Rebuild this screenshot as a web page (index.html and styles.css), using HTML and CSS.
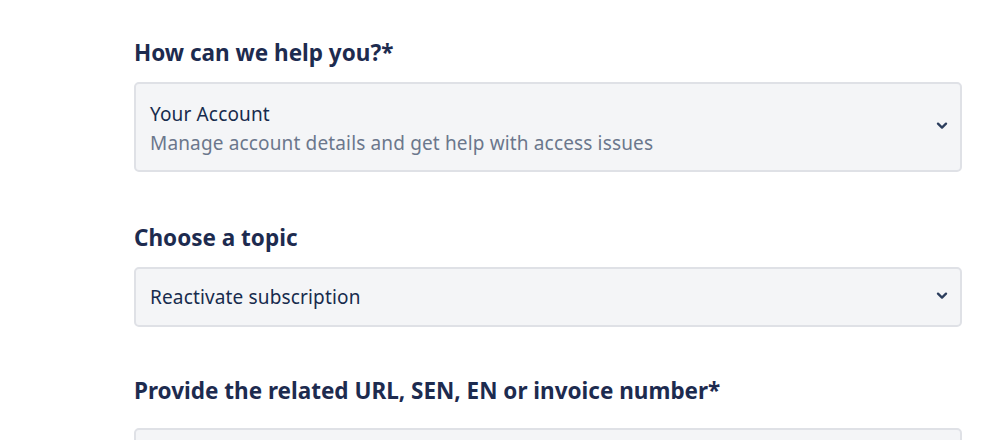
FILE: index.html
```html
<!DOCTYPE html>
<html lang="en">
<head>
<meta charset="utf-8">
<link rel="stylesheet" href="styles.css">
</head>
<body>
<form class="form">
  <div class="field">
    <h2 class="label">How can we help you?*</h2>
    <div class="select select-tall">
      <div class="select-text">
        <div class="value">Your Account</div>
        <div class="desc">Manage account details and get help with access issues</div>
      </div>
      <svg class="chev" viewBox="0 0 12 8" width="12" height="8"><path d="M2 1.6 L6 5.6 L10 1.6" fill="none" stroke="currentColor" stroke-width="2.3" stroke-linecap="round" stroke-linejoin="round"/></svg>
    </div>
  </div>
  <div class="field">
    <h2 class="label">Choose a topic</h2>
    <div class="select">
      <div class="select-text">
        <div class="value">Reactivate subscription</div>
      </div>
      <svg class="chev" viewBox="0 0 12 8" width="12" height="8"><path d="M2 1.6 L6 5.6 L10 1.6" fill="none" stroke="currentColor" stroke-width="2.3" stroke-linecap="round" stroke-linejoin="round"/></svg>
    </div>
  </div>
  <div class="field field-last">
    <h2 class="label">Provide the related URL, SEN, EN or invoice number*</h2>
    <div class="select"></div>
  </div>
</form>
</body>
</html>
```
FILE: styles.css
```css
html, body {
  margin: 0;
  padding: 0;
  background: #ffffff;
}
body {
  font-family: "Noto Sans", sans-serif;
  color: #172b4d;
}
.form {
  width: 828px;
  margin-left: 134px;
  padding-top: 37px;
  display: flex;
  flex-direction: column;
  gap: 50px;
}
.field {
  display: flex;
  flex-direction: column;
  gap: 13px;
}
.field-last {
  gap: 21px;
  margin-top: -2px;
}
.label {
  margin: 0;
  font-size: 22.5px;
  line-height: 32px;
  font-weight: 700;
  color: #1d2b4f;
}
.select {
  box-sizing: border-box;
  height: 60px;
  background: #f4f5f7;
  border: 2px solid #dfe1e6;
  border-radius: 5px;
  display: flex;
  align-items: center;
  padding: 0 14px 0 14px;
}
.select-tall {
  height: 90px;
}
.select-text {
  flex: 1;
  display: flex;
  flex-direction: column;
  gap: 4px;
}
.select-tall .select-text {
  padding-top: 3px;
}
.value {
  font-size: 19px;
  line-height: 25px;
  letter-spacing: 0.15px;
  color: #172b4d;
}
.desc {
  font-size: 19px;
  line-height: 25px;
  letter-spacing: 0.15px;
  color: #6b778c;
}
.chev {
  color: #2c3e5d;
  flex: none;
  margin-right: -2px;
  margin-top: -2px;
}
```
